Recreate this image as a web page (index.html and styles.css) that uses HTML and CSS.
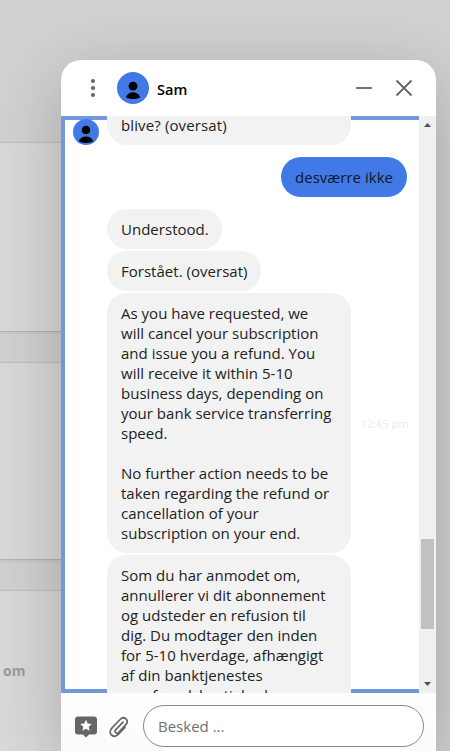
FILE: index.html
```html
<!DOCTYPE html>
<html lang="da">
<head>
<meta charset="utf-8">
<title>Chat</title>
<link rel="stylesheet" href="styles.css">
</head>
<body>
<main class="page">
  <section class="card card-first"></section>
  <section class="card card-second"></section>
  <section class="card card-third"><span class="card-text">om</span></section>
</main>
<aside class="chat">
  <header class="chat-header">
    <svg class="menu" width="6" height="20" viewBox="0 0 6 20"><circle cx="3" cy="3" r="2.1"/><circle cx="3" cy="10" r="2.1"/><circle cx="3" cy="17" r="2.1"/></svg>
    <svg class="avatar" width="32" height="32" viewBox="0 0 32 32"><circle cx="16" cy="16" r="16" fill="#417ae6"/><circle cx="16" cy="14.2" r="4.4"/><path d="M8.8 25.2C10.2 21.8 12.8 20.2 16 20.2s5.800 1.600 7.200 5C21.400 26.400 19 27 16 27s-5.400-.6-7.200-1.800Z"/></svg>
    <h1 class="name">Sam</h1>
    <svg class="minimize" width="16" height="16" viewBox="0 0 16 16"><path d="M0 8h16"/></svg>
    <svg class="close" width="16" height="16" viewBox="0 0 16 16"><path d="M.5.5l15 15M15.500.5l-15 15"/></svg>
  </header>
  <div class="chat-body">
    <div class="messages">
      <div class="row">
        <svg class="small-avatar" width="26" height="26" viewBox="0 0 26 26"><circle cx="13" cy="13" r="13" fill="#417ae6"/><circle cx="13" cy="11" r="4.300"/><path d="M5.800 22.300C7 19 9.600 17.400 13 17.400s6 1.600 7.200 4.900C18.300 23.400 16 24 13 24s-5.300-.6-7.200-1.700Z"/></svg>
        <p class="bubble wide continued">blive? (oversat)</p>
      </div>
      <p class="bubble mine">desværre ikke</p>
      <p class="bubble understood">Understood.</p>
      <p class="bubble agreed">Forstået. (oversat)</p>
      <div class="row timed">
        <p class="bubble wide">As you have requested, we<br>will cancel your subscription<br>and issue you a refund. You<br>will receive it within 5-10<br>business days, depending on<br>your bank service transferring<br>speed.<br><br>No further action needs to be<br>taken regarding the refund or<br>cancellation of your<br>subscription on your end.</p>
        <time class="time">12:45 pm</time>
      </div>
      <p class="bubble wide">Som du har anmodet om,<br>annullerer vi dit abonnement<br>og udsteder en refusion til<br>dig. Du modtager den inden<br>for 5-10 hverdage, afhængigt<br>af din banktjenestes<br>overførselshastighed.</p>
    </div>
    <div class="scrollbar">
      <svg width="7" height="4" viewBox="0 0 7 4"><path d="M0 4L3.500 0L7 4Z"/></svg>
      <div class="thumb"></div>
      <svg class="down" width="7" height="4" viewBox="0 0 7 4"><path d="M0 0h7L3.500 4Z"/></svg>
    </div>
  </div>
  <footer class="composer">
    <svg class="rate" width="22" height="22" viewBox="0 0 22 22"><path fill="#666" d="M3 .5h16a3 3 0 0 1 3 3v12a3 3 0 0 1-3 3h-5L11 21.500 8 18.500H3a3 3 0 0 1-3-3v-12a3 3 0 0 1 3-3Z"/><path fill="#fff" d="M11 3.800l1.700 3.800 4.100.4-3.100 2.700.9 4.100L11 12.700l-3.600 2.100.9-4.100L5.200 8l4.100-.4Z"/></svg>
    <svg class="clip" width="20" height="22" viewBox="0 0 20 22"><path d="M14 6.200L6.800 13.600c-1 1-.9 2.300-.1 3s2 .7 3-.3l7-7.400c2-2.200 1.900-4.500.3-6s-3.900-1.400-5.900.6l-8 8.300c-2.500 2.600-2.500 5.400-.6 7.200 1.900 1.700 4.700 1.500 7-.8l6.500-6.800"/></svg>
    <div class="input">Besked ...</div>
  </footer>
</aside>
</body>
</html>
```
FILE: styles.css
```css
* { box-sizing: border-box; }
body {
  margin: 0;
  width: 450px;
  height: 751px;
  overflow: hidden;
  background: #d1d1d1;
  font-family: "Open Sans", "Noto Sans", sans-serif;
}
p, h1 { margin: 0; }
.page { height: 751px; padding-top: 142px; overflow: hidden; }
.card {
  width: 100px;
  background: #d9d9d9;
  border-top: 1px solid #bfbfbf;
  border-bottom: 1px solid #b2b2b2;
  box-shadow: 0 1px 3px rgba(0, 0, 0, .08);
}
.card-first { height: 190px; margin-bottom: 30px; }
.card-second { height: 198px; margin-bottom: 30px; }
.card-third { height: 200px; padding: 70px 0 0 3px; }
.card-text {
  display: block;
  color: #9b9b9d;
  font: 700 14px/20px "Open Sans", sans-serif;
}
.chat {
  position: absolute;
  left: 61px;
  top: 60px;
  width: 375px;
  height: 691px;
  border-radius: 20px 20px 0 0;
  background: #fff;
  box-shadow: 0 18px 70px rgba(0, 0, 0, .22);
}
.chat-header { height: 56px; display: flex; align-items: center; padding: 0 24px 0 29px; }
.menu { fill: #666; }
.avatar { margin-left: 21px; }
.name {
  flex: 1;
  margin-left: 8px;
  padding-top: 4px;
  font-size: 14.500px;
  line-height: 20px;
  font-weight: 600;
}
.minimize, .close { stroke: #666; stroke-width: 1.800; fill: none; }
.close { margin-left: 24px; overflow: visible; }
.chat-body { display: flex; height: 577px; overflow: hidden; }
.messages {
  width: 358px;
  height: 577px;
  overflow: hidden;
  display: flex;
  flex-direction: column;
  align-items: flex-start;
  gap: 2px;
  padding-left: 46px;
  box-shadow: inset 4px 4px #7398d9, inset 0 -4px #7398d9;
}
.messages > * { flex-shrink: 0; }
.row { display: flex; align-items: flex-end; }
.row:first-child { margin: -11px 0 10px -34px; gap: 8px; }
.bubble {
  padding: 10px 14px;
  border-radius: 20px;
  background: #f2f2f2;
  color: #222;
  font-size: 15px;
  line-height: 20px;
  letter-spacing: .02px;
  white-space: nowrap;
}
.wide { width: 244px; }
.continued { border-radius: 0 0 20px 20px; letter-spacing: .12px; }
.mine {
  align-self: flex-end;
  width: 126px;
  margin: 0 12px 10px 0;
  background: #417ae6;
  color: #101820;
}
.understood { width: 115px; }
.agreed { width: 154px; }
.timed { align-items: center; gap: 9px; }
.time { padding-top: 2px; color: #ececec; font-size: 11.200px; line-height: 16px; }
.scrollbar {
  width: 17px;
  display: flex;
  flex-direction: column;
  align-items: center;
  padding: 7px 0;
  background: #f0f0f0;
  fill: #505050;
}
.thumb { width: 13px; height: 90px; margin-top: 412px; background: #c1c1c1; }
.down { margin-top: auto; }
.composer {
  display: flex;
  align-items: center;
  height: 58px;
  padding: 8px 12px 0 14px;
  background: linear-gradient(#fff, #fbfbfb);
}
.rate { margin-top: 1px; }
.clip { margin: 1px 0 0 12px; fill: none; stroke: #666; stroke-width: 1.700; stroke-linecap: round; }
.input {
  flex: 1;
  height: 42px;
  margin-left: 14px;
  padding: 0 14px;
  border: 1px solid #888;
  border-radius: 21px;
  background: #fff;
  color: #707070;
  font-size: 15px;
  line-height: 41px;
}
```
